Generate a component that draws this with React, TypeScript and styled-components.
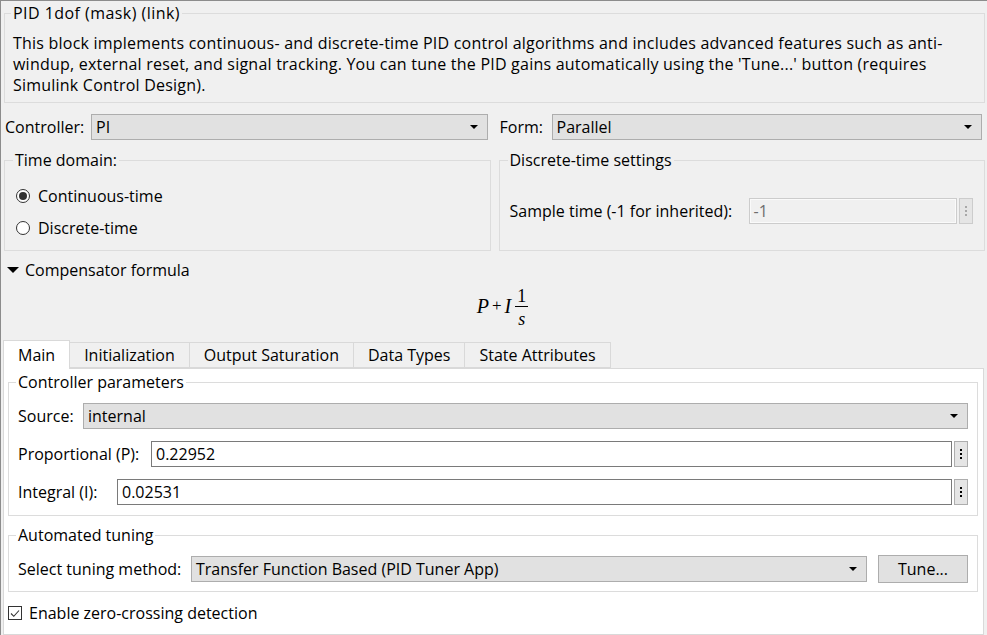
import React from "react";
import styled, { createGlobalStyle } from "styled-components";

const GlobalStyle = createGlobalStyle`
  html, body { margin: 0; padding: 0; background: #f0f0f0; }
  body {
    font-family: "Open Sans", "Noto Sans", sans-serif;
    font-size: 16px;
    color: #000;
  }
  *, *::before, *::after { box-sizing: border-box; }
`;

const Window = styled.div`
  width: 987px;
  height: 635px;
  overflow: hidden;
  background: #f0f0f0;
  border-top: 1px solid #8c8c8c;
  border-left: 1px solid #8c8c8c;
  padding: 2px 2px 0 3px;
  display: flex;
  flex-direction: column;
`;

const Group = styled.fieldset<{ $pad: string; $top?: number }>`
  margin: ${(p) => p.$top ?? 0}px 0 0 0;
  min-width: 0;
  border: 1px solid #dcdcdc;
  padding: ${(p) => p.$pad};
`;

const Legend = styled.legend<{ $shift?: number; $spacing?: number }>`
  padding: 0 2px;
  margin-left: ${(p) => p.$shift ?? -2}px;
  line-height: 20px;
  font-size: 16px;
  letter-spacing: ${(p) => p.$spacing ?? 0}px;
`;

const Description = styled.p`
  margin: 0;
  line-height: 21px;
  white-space: nowrap;
  letter-spacing: 0.22px;
`;

const TopRow = styled.div`
  margin-top: 11px;
  display: grid;
  grid-template-columns: 1fr 1fr;
  gap: 12px;
  padding: 0 3px 0 1px;
`;

const Field = styled.div<{ $gap?: number }>`
  flex: 1;
  display: flex;
  align-items: center;
  gap: ${(p) => p.$gap ?? 8}px;
  height: 26px;
  min-width: 0;
`;

const Label = styled.span<{ $w?: number }>`
  white-space: nowrap;
  line-height: 20px;
  flex: none;
  width: ${(p) => (p.$w ? `${p.$w}px` : "auto")};
`;

const Combo = styled.div<{ $h?: number }>`
  flex: 1;
  min-width: 0;
  height: ${(p) => p.$h ?? 26}px;
  background: #e1e1e1;
  border: 1px solid #adadad;
  display: flex;
  align-items: center;
  padding: 0 9px 0 4px;
  white-space: nowrap;
`;

const ComboText = styled.span`
  flex: 1;
  line-height: 20px;
`;

const Arrow = styled.span`
  width: 0;
  height: 0;
  border-left: 4px solid transparent;
  border-right: 4px solid transparent;
  border-top: 4px solid #000;
`;

const GroupsRow = styled.div`
  margin-top: 10px;
  display: grid;
  grid-template-columns: 1fr 1fr;
  gap: 8px;
  align-items: stretch;
`;

const RadioRow = styled.label`
  display: flex;
  align-items: center;
  gap: 8px;
  height: 32px;
`;

const RadioCircle = styled.span<{ $on?: boolean }>`
  width: 14px;
  height: 14px;
  border-radius: 50%;
  border: 1px solid #333;
  background: #fff;
  display: flex;
  align-items: center;
  justify-content: center;
  &::after {
    content: "";
    width: 8px;
    height: 8px;
    border-radius: 50%;
    background: ${(p) => (p.$on ? "#333" : "transparent")};
  }
`;

const TextInput = styled.div<{ $disabled?: boolean }>`
  flex: 1;
  min-width: 0;
  height: 26px;
  background: ${(p) => (p.$disabled ? "#f0f0f0" : "#fff")};
  border: 1px solid ${(p) => (p.$disabled ? "#cccccc" : "#7a7a7a")};
  box-shadow: ${(p) => (p.$disabled ? "inset 0 0 0 1px #fafafa" : "none")};
  color: ${(p) => (p.$disabled ? "#6d6d6d" : "#000")};
  display: flex;
  align-items: center;
  padding-left: 4px;
  line-height: 20px;
`;

const DotsButton = styled.div<{ $disabled?: boolean }>`
  width: 14px;
  height: 26px;
  flex: none;
  background: #e5e5e5;
  border: 1px solid ${(p) => (p.$disabled ? "#cccccc" : "#adadad")};
  display: flex;
  align-items: center;
  justify-content: center;
  color: ${(p) => (p.$disabled ? "#a8a8a8" : "#000")};
`;

const InputPair = styled.div`
  flex: 1;
  min-width: 0;
  display: flex;
  align-items: center;
  gap: 2px;
`;

const Collapser = styled.div`
  margin-top: 8px;
  height: 22px;
  display: flex;
  align-items: center;
  gap: 6px;
  padding-left: 3px;
`;

const DownTriangle = styled.span`
  width: 0;
  height: 0;
  border-left: 6px solid transparent;
  border-right: 6px solid transparent;
  border-top: 6px solid #000;
`;

const Formula = styled.div`
  height: 50px;
  display: flex;
  align-items: center;
  justify-content: center;
  font-family: "Liberation Serif", "Times New Roman", serif;
  font-size: 20px;
  padding-left: 16px;
`;

const MathVar = styled.span`
  font-style: italic;
`;

const MathOp = styled.span`
  font-size: 17px;
  margin: 0 3px 0 3px;
`;

const Fraction = styled.span`
  display: inline-flex;
  flex-direction: column;
  align-items: center;
  margin-left: 4px;
  font-size: 18px;
  line-height: 18px;
`;

const Numer = styled.span`
  padding: 3px 2px 1px;
  border-bottom: 1px solid #000;
`;

const Denom = styled.span`
  font-style: italic;
  padding-top: 3px;
`;

const TabBar = styled.div`
  margin-top: 9px;
  margin-left: -1px;
  display: flex;
  align-items: flex-end;
  height: 28px;
  position: relative;
  z-index: 1;
`;

const Tab = styled.div<{ $active?: boolean }>`
  height: ${(p) => (p.$active ? 29 : 26)}px;
  margin-bottom: ${(p) => (p.$active ? -1 : 0)}px;
  padding: 0 14px;
  display: flex;
  align-items: center;
  background: ${(p) => (p.$active ? "#fff" : "#f0f0f0")};
  border: 1px solid #d9d9d9;
  border-bottom: ${(p) => (p.$active ? "none" : "1px solid #d9d9d9")};
  margin-left: -1px;
  &:first-child { margin-left: 0; }
  white-space: nowrap;
  line-height: 20px;
`;

const Pane = styled.div`
  flex: 1;
  margin-left: -1px;
  margin-right: 1px;
  background: #fff;
  border: 1px solid #d9d9d9;
  padding: 3px 5px 0 4px;
  display: flex;
  flex-direction: column;
`;

const Rows = styled.div`
  display: flex;
  flex-direction: column;
  gap: 12px;
`;

const TuneRow = styled.div`
  display: flex;
  align-items: center;
  height: 28px;
`;

const Button = styled.div`
  width: 90px;
  height: 28px;
  margin-left: 11px;
  background: #e1e1e1;
  border: 1px solid #adadad;
  display: flex;
  align-items: center;
  justify-content: center;
  line-height: 20px;
`;

const CheckRow = styled.label`
  margin-top: 8px;
  height: 26px;
  display: flex;
  align-items: center;
  gap: 7px;
`;

const CheckBox = styled.span`
  width: 14px;
  height: 14px;
  border: 1px solid #333;
  background: #fff;
  display: flex;
  align-items: center;
  justify-content: center;
`;

const Dots = () => (
  <svg width="4" height="14" viewBox="0 0 4 14">
    <rect x="1" y="2" width="2" height="2" fill="currentColor" />
    <rect x="1" y="6" width="2" height="2" fill="currentColor" />
    <rect x="1" y="10" width="2" height="2" fill="currentColor" />
  </svg>
);

export default function App() {
  return (
    <>
      <GlobalStyle />
      <Window>
        <Group $pad="10px 8px 6px 8px">
          <Legend $spacing={0.45}>PID 1dof (mask) (link)</Legend>
          <Description>
            This block implements continuous- and discrete-time PID control algorithms and includes advanced features such as anti-
            <br />
            windup, external reset, and signal tracking. You can tune the PID gains automatically using the 'Tune...' button (requires
            <br />
            Simulink Control Design).
          </Description>
        </Group>

        <TopRow>
          <Field>
            <Label $w={78}>Controller:</Label>
            <Combo>
              <ComboText>PI</ComboText>
              <Arrow />
            </Combo>
          </Field>
          <Field>
            <Label $w={44}>Form:</Label>
            <Combo>
              <ComboText>Parallel</ComboText>
              <Arrow />
            </Combo>
          </Field>
        </TopRow>

        <GroupsRow>
          <Group $pad="10px 8px 6px 11px">
            <Legend $shift={-3}>Time domain:</Legend>
            <RadioRow>
              <RadioCircle $on />
              <Label>Continuous-time</Label>
            </RadioRow>
            <RadioRow>
              <RadioCircle />
              <Label>Discrete-time</Label>
            </RadioRow>
          </Group>
          <Group $pad="28px 11px 0 10px">
            <Legend>Discrete-time settings</Legend>
            <Field>
              <Label $w={231}>Sample time (-1 for inherited):</Label>
              <InputPair>
                <TextInput $disabled>-1</TextInput>
                <DotsButton $disabled>
                  <Dots />
                </DotsButton>
              </InputPair>
            </Field>
          </Group>
        </GroupsRow>

        <Collapser>
          <DownTriangle />
          <Label>Compensator formula</Label>
        </Collapser>

        <Formula>
          <MathVar>P</MathVar>
          <MathOp>+</MathOp>
          <MathVar>I</MathVar>
          <Fraction>
            <Numer>1</Numer>
            <Denom>s</Denom>
          </Fraction>
        </Formula>

        <TabBar>
          <Tab $active>Main</Tab>
          <Tab>Initialization</Tab>
          <Tab>Output Saturation</Tab>
          <Tab>Data Types</Tab>
          <Tab>State Attributes</Tab>
        </TabBar>

        <Pane>
          <Group $pad="11px 9px 10px 9px">
            <Legend>Controller parameters</Legend>
            <Rows>
              <Field>
                <Label $w={57}>Source:</Label>
                <Combo>
                  <ComboText>internal</ComboText>
                  <Arrow />
                </Combo>
              </Field>
              <Field>
                <Label $w={125}>Proportional (P):</Label>
                <InputPair>
                  <TextInput>0.22952</TextInput>
                  <DotsButton>
                    <Dots />
                  </DotsButton>
                </InputPair>
              </Field>
              <Field>
                <Label $w={91}>Integral (I):</Label>
                <InputPair>
                  <TextInput>0.02531</TextInput>
                  <DotsButton>
                    <Dots />
                  </DotsButton>
                </InputPair>
              </Field>
            </Rows>
          </Group>

          <Group $pad="10px 9px 8px 9px" $top={9}>
            <Legend>Automated tuning</Legend>
            <TuneRow>
              <Field $gap={9}>
                <Label $w={164}>Select tuning method:</Label>
                <Combo>
                  <ComboText>Transfer Function Based (PID Tuner App)</ComboText>
                  <Arrow />
                </Combo>
              </Field>
              <Button>Tune...</Button>
            </TuneRow>
          </Group>

          <CheckRow>
            <CheckBox>
              <svg width="10" height="9" viewBox="0 0 10 9">
                <path d="M1 4.5 L3.8 7.3 L9 1.5" fill="none" stroke="#333" strokeWidth="1.1" />
              </svg>
            </CheckBox>
            <Label>Enable zero-crossing detection</Label>
          </CheckRow>
        </Pane>
      </Window>
    </>
  );
}
